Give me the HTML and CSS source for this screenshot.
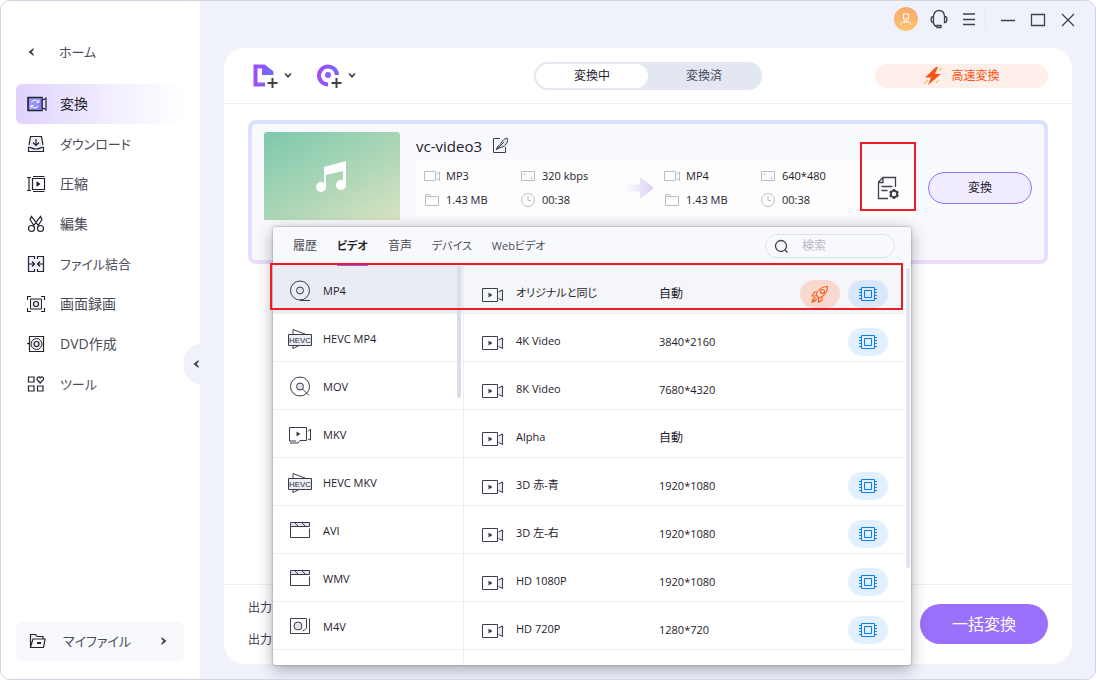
FILE: index.html
```html
<!DOCTYPE html>
<html lang="ja">
<head>
<meta charset="utf-8">
<meta name="viewport" content="width=device-width, initial-scale=1">
<title>変換</title>
<link rel="stylesheet" href="styles.css">
</head>
<body>
<svg class="sprite" aria-hidden="true">
  <defs>
    <linearGradient id="violet" x1="0" y1="0" x2="1" y2="0"><stop offset="0" stop-color="#a04ef8"/><stop offset="1" stop-color="#7268fb"/></linearGradient>
    <linearGradient id="fade" x1="0" y1="0" x2="1" y2="0"><stop offset="0" stop-color="#ded4f6" stop-opacity=".1"/><stop offset="1" stop-color="#d8cdf3"/></linearGradient>
  </defs>
  <symbol id="play" viewBox="0 0 22 16"><path d="M1.500 1.500h15v13h-15z" class="line"/><path d="M7.500 5.500v5l4-2.500z" fill="#3a3c4c"/><path d="M17.500 5l4-2v10.500l-4-2" fill="#e3e5ef" stroke="#3a3c4c"/></symbol>
  <symbol id="disc" viewBox="0 0 24 22"><circle cx="12" cy="10.500" r="9.500" class="line"/><circle cx="12" cy="10.500" r="3.500" fill="#dfe2ec" stroke="#3a3c4c"/><path d="M12 20.500h10" class="line"/></symbol>
  <symbol id="disc-q" viewBox="0 0 24 22"><circle cx="12" cy="10.500" r="9.500" class="line"/><circle cx="12" cy="10.500" r="3.500" fill="#dfe2ec" stroke="#3a3c4c"/><path d="M14.500 13l6.500 6.500" class="line"/></symbol>
  <symbol id="mkv" viewBox="0 0 24 22"><path d="M8 17H1.500V3.500h17v13H12M2 19h8l2-2.500" class="line"/><path d="M8.500 7.500v5l4-2.500z" fill="#3a3c4c"/><path d="M20 7.500L22.500 5v11L20 15" class="line"/></symbol>
  <symbol id="clap" viewBox="0 0 24 22"><path d="M2.500 2.500h19v4h-19z" fill="#dfe2ec" stroke="#3a3c4c"/><path d="M2.500 6.500v11h19v-9M7 3l3 3M14 3l3 3" class="line"/></symbol>
  <symbol id="m4v" viewBox="0 0 24 22"><path d="M18.500 2.500h-16v15h19v-15" class="line"/><circle cx="10" cy="10" r="4" fill="#dfe2ec" stroke="#3a3c4c"/><path d="M18.500 3v8c0 2-1.500 3-4 4" class="line"/></symbol>
  <symbol id="chip" viewBox="0 0 18 16"><path d="M2.500 1.500h13v13h-13zM5.500 4.500h7v7h-7zM0 3.500h2.500M0 6.500h2.500M0 9.500h2.500M0 12.500h2.500M15.500 3.500H18M15.500 6.500H18M15.500 9.500H18M15.500 12.500H18" fill="none" stroke="#0a7cf0"/></symbol>
  <symbol id="rocket" viewBox="0 0 18 18"><g fill="none" stroke="#f4601c" stroke-width="1.200"><path d="M5 10C6.500 5 11 1.500 16.500 1.500c0 5.500-3.500 10-8.500 11.500zM6.500 7L3.500 7 1 11h3.500M11 12v3l-3.500 2.500V13"/><circle cx="11.500" cy="6.500" r="2"/><path d="M4.500 12.500c-2 .5-3 2-3.500 4.500 2.500-.5 4-1.500 4.500-3.500M1 14.500l3 2"/></g></symbol>
  <symbol id="s-video" viewBox="0 0 16 12"><path d="M.5 1.500h11v9H.5zM12.500 4L15.500 2v8.500l-3-2" class="pale"/></symbol>
  <symbol id="s-folder" viewBox="0 0 16 14"><path d="M1.500 12.500v-11h4l1.500 2h7.500v9zM1.500 3.500H7" class="pale"/></symbol>
  <symbol id="s-size" viewBox="0 0 16 12"><path d="M1.500 1.500h13v9h-13zM4 5V4h1.500M12 7v1.500h-1.500" class="pale"/></symbol>
  <symbol id="s-clock" viewBox="0 0 16 14"><circle cx="8" cy="7" r="6.500" class="pale"/><path d="M8 3v4.500h3" class="pale"/></symbol>
  <symbol id="caret" viewBox="0 0 8 6"><path d="M0 0.500h2L4 2.500 6 .5h2L4 5z" fill="#3a3c48"/></symbol>
  <symbol id="left" viewBox="0 0 6 8"><path d="M5.500 0v2L3.500 4l2 2v2L.5 4z" fill="#3a3c48"/></symbol>
</svg>

<div class="window">
  <aside class="sidebar">
    <nav class="nav">
      <a class="home kana" href="#"><svg class="back"><use href="#left"/></svg>ホーム</a>
      <ul class="menu">
        <li><a class="item current" href="#"><svg viewBox="0 0 20 18"><path d="M1 2.500h14v13H1z" fill="#9a92fa" stroke="#22232f" stroke-width="1.300"/><path d="M11 2.500h4v13h-4z" fill="#837af6" /><path d="M1 2.500h14v13H1z" fill="none" stroke="#22232f"/><path d="M16 5l3-2v12l-3-2" class="dark"/><path d="M4.500 7.500c1-3 5.500-3 7-.5M12 4.500v3H9.500M11.500 10.500c-1 3-5.500 3-7 .5M4 13.500v-3h2.500" fill="none" stroke="#fff"/></svg>変換</a></li>
        <li><a class="item kana" href="#"><svg viewBox="0 0 20 18"><path d="M3.500 1.500h11l2 10v5h-15v-5z" fill="#eceef6"/><path d="M2 10l1.500-8.500h11L16 10M1.500 12v4.500h15V12M1.500 12c3 0 3 2 7.500 2s4.500-2 7.500-2M9 4v6M6 7.500l3 3 3-3" class="dark"/></svg>ダウンロード</a></li>
        <li><a class="item" href="#"><svg viewBox="0 0 20 18"><path d="M5.500 3.500h12v11h-12z" fill="#eceef6" class="dark"/><path d="M2 3v12M0 2.500h4M0 15.500h4M6 1.500h11.500M6 16.500h11.500" class="dark"/><path d="M9.500 6v6l4-3z" fill="#22232f"/></svg>圧縮</a></li>
        <li><a class="item" href="#"><svg viewBox="0 0 20 18"><path d="M12 11.500L4.500 1.500 3 4.500l4.500 7M6 11.500l7.500-10L15 4.500l-4.500 7" class="dark"/><circle cx="4.500" cy="13.500" r="3" class="dark"/><circle cx="13.500" cy="13.500" r="3" class="dark"/></svg>編集</a></li>
        <li><a class="item kana" href="#"><svg viewBox="0 0 20 18"><path d="M1.500 1.500h15v15h-15z" fill="#eceef6"/><path d="M7.500 4V1.500h-6v15h6V14M10.500 4V1.500h6v15h-6V14M2 9h5M5 6.500L7.500 9 5 11.500M16 9h-5M13 6.500L10.500 9l2.500 2.500" class="dark"/></svg>ファイル結合</a></li>
        <li><a class="item" href="#"><svg viewBox="0 0 20 18"><path d="M3.500 4h11v10h-11z" fill="#eceef6" stroke="#22232f"/><circle cx="9" cy="9" r="2.500" class="dark"/><path d="M.5 5V1.500H4M14 1.500h3.500V5M.5 13v3.500H4M14 16.500h3.500V13" class="dark"/></svg>画面録画</a></li>
        <li><a class="item" href="#"><svg viewBox="0 0 20 18"><path d="M2.500 1.500h14v15h-14z" class="dark"/><circle cx="9.500" cy="9" r="5.500" fill="#eceef6" stroke="#22232f"/><circle cx="9.500" cy="9" r="2.500" class="dark"/><path d="M0 8.500h3" class="dark"/></svg>DVD作成</a></li>
        <li><a class="item kana" href="#"><svg viewBox="0 0 20 18"><path d="M1.500 2h5.500v5H1.500zM1.500 11h5.500v5H1.500zM10.500 11H16v5h-5.500zM13.200 8L10 4.500C10 2 12 1 13.200 3 14.500 1 17 2 16.500 4.500z" class="dark"/></svg>ツール</a></li>
      </ul>
    </nav>
    <button class="files kana" type="button"><svg viewBox="0 0 18 16"><path d="M1.500 14V1.500h5l1.500 2h6V6M1.500 14L4 6h12l-1.500 8.500h-13z" class="dark"/><path d="M8 9h4v2H8z" fill="#22232f"/></svg><span>マイファイル</span><svg class="go"><use href="#left"/></svg></button>
    <button class="collapse" type="button" aria-label="折りたたむ"><svg><use href="#left"/></svg></button>
  </aside>

  <main class="main">
    <header class="titlebar">
      <button class="avatar" type="button" aria-label="アカウント"><svg viewBox="0 0 12 12"><path d="M3.500 1h5v5h-5zM1 11.500c0-3.500 10-3.500 10 0M3.500 8h5" fill="none" stroke="#fff"/></svg></button>
      <button class="tool" type="button" aria-label="サポート"><svg viewBox="0 0 18 20"><path d="M3.500 7C4 3 6 1.500 9 1.500s5 1.500 5.500 5.500M3.500 7v6.500H3C.5 13.500.5 7.500 3 7.500M14.500 7v6.500h.5c2.500 0 2.500-6 0-6M3.500 13.500C4 16 5 17.500 7 17.500M7 16.500h4v2H7z" class="bold"/></svg></button>
      <button class="tool" type="button" aria-label="メニュー"><svg viewBox="0 0 18 20"><path d="M3 5h12M3 10.500h12M3 15.500h12" class="bold"/></svg></button>
      <div class="system">
        <button class="tool" type="button" aria-label="最小化"><svg viewBox="0 0 18 20"><path d="M2 11.500h14" class="bold"/></svg></button>
        <button class="tool" type="button" aria-label="最大化"><svg viewBox="0 0 18 20"><path d="M2.500 5.500h13v11h-13z" class="bold"/></svg></button>
        <button class="tool" type="button" aria-label="閉じる"><svg viewBox="0 0 18 20"><path d="M3 5l12 12M15 5L3 17" class="bold"/></svg></button>
      </div>
    </header>

    <section class="workspace">
      <div class="toolbar">
        <div class="adders">
          <button class="adder" type="button" aria-label="ファイルを追加"><svg class="add" viewBox="0 0 26 26"><path d="M13 21.500H3.500v-18h8.500L19.500 9.500v2.500M12 3.500V10h7" fill="none" stroke="url(#violet)" stroke-width="4"/><path d="M20.500 15v10M15.500 20h10" fill="none" stroke="#3f414d" stroke-width="2"/></svg><svg class="drop"><use href="#caret"/></svg></button>
          <button class="adder" type="button" aria-label="ディスクを追加"><svg class="add" viewBox="0 0 26 26"><path d="M12 21.500A9 9 0 1 1 21 12" fill="none" stroke="url(#violet)" stroke-width="4"/><circle cx="12" cy="12" r="3" fill="#8a60fa"/><path d="M20.500 15v10M15.500 20h10" fill="none" stroke="#3f414d" stroke-width="2"/></svg><svg class="drop"><use href="#caret"/></svg></button>
        </div>
        <div class="segments">
          <button class="segment on" type="button">変換中</button>
          <button class="segment" type="button">変換済</button>
        </div>
        <button class="fast" type="button"><svg viewBox="0 0 20 20"><path d="M13 1L2 11.500h6L5 19 18 8h-6l3-7z" fill="#fb5312"/><path d="M16 5l3-3M1 18l4-4M13 17l3-3" stroke="#ffc37c" stroke-width="1.500"/></svg>高速変換</button>
      </div>

      <div class="queue">
        <article class="job">
          <svg class="thumb" viewBox="0 0 136 88" role="img" aria-label="音楽"><path d="M60 35l22-6v24h-3V39L62 43v13h-2z" fill="#fff"/><circle cx="57" cy="55" r="5" fill="#fff"/><circle cx="77" cy="53" r="5" fill="#fff"/></svg>
          <div class="info">
            <h2 class="name">vc-video3 <button class="edit" type="button" aria-label="名前を編集"><svg viewBox="0 0 18 18"><path d="M8 1.500H1.500v14h12V10" class="line"/><path d="M4 13l2-4C9 8 10 2 15 1c2 3-1 8-5 9l-4 1.500L4 13l8-8" fill="#dfe2ec" stroke="#3a3c4c"/></svg></button></h2>
            <div class="specs">
              <ul class="spec-grid">
                <li><svg><use href="#s-video"/></svg>MP3</li><li><svg><use href="#s-size"/></svg>320 kbps</li>
                <li><svg><use href="#s-folder"/></svg>1.43 MB</li><li><svg><use href="#s-clock"/></svg>00:38</li>
              </ul>
              <svg class="arrow" viewBox="0 0 28 24"><path d="M0 8.500h14V1l14 11-14 11v-7.500H0z" fill="url(#fade)"/></svg>
              <ul class="spec-grid">
                <li><svg><use href="#s-video"/></svg>MP4</li><li><svg><use href="#s-size"/></svg>640*480</li>
                <li><svg><use href="#s-folder"/></svg>1.43 MB</li><li><svg><use href="#s-clock"/></svg>00:38</li>
              </ul>
              <button class="settings" type="button" aria-label="出力設定"><svg viewBox="0 0 24 24"><path d="M12 22.500H2.500V6L7 1.500h12.500V11M2.500 6.500H7v-5M5.500 10.500h11M5.500 14.500h6" class="bold"/><circle cx="18" cy="18" r="3.200" fill="none" stroke="#3f414d" stroke-width="2"/><path d="M18 13v2.500M18 20.500V23M13.700 15.500l2 1.200M20.300 19.300l2 1.200M22.300 15.500l-2 1.200M15.700 19.300l-2 1.200" stroke="#3f414d" stroke-width="2.400"/></svg></button>
            </div>
          </div>
          <button class="convert" type="button">変換</button>

          <div class="popup">
            <div class="popup-head">
              <div class="tabs">
                <button class="tab" type="button">履歴</button>
                <button class="tab kana on" type="button">ビデオ</button>
                <button class="tab" type="button">音声</button>
                <button class="tab kana" type="button">デバイス</button>
                <button class="tab kana" type="button">Webビデオ</button>
              </div>
              <label class="search"><svg viewBox="0 0 16 16"><circle cx="7" cy="8" r="5.500" class="bold"/><path d="M11 12l2.500 2.500" class="bold"/></svg><input type="text" placeholder="検索" aria-label="検索"></label>
            </div>
            <div class="popup-body">
              <ul class="formats">
                <li><button class="format on" type="button"><svg><use href="#disc"/></svg>MP4</button></li>
                <li><button class="format" type="button"><svg viewBox="0 0 24 22"><path d="M5 6.500V1.500L18 6.500M5 17.500v3l6-3" class="line"/><path d="M.5 6.500h23v11H.5z" fill="#eceef6" stroke="#3a3c4c"/><text x="12" y="14.500" text-anchor="middle" class="hevc-text">HEVC</text></svg>HEVC MP4</button></li>
                <li><button class="format" type="button"><svg><use href="#disc-q"/></svg>MOV</button></li>
                <li><button class="format" type="button"><svg><use href="#mkv"/></svg>MKV</button></li>
                <li><button class="format" type="button"><svg viewBox="0 0 24 22"><path d="M5 6.500V1.500L18 6.500M5 17.500v3l6-3" class="line"/><path d="M.5 6.500h23v11H.5z" fill="#eceef6" stroke="#3a3c4c"/><text x="12" y="14.500" text-anchor="middle" class="hevc-text">HEVC</text></svg>HEVC MKV</button></li>
                <li><button class="format" type="button"><svg><use href="#clap"/></svg>AVI</button></li>
                <li><button class="format" type="button"><svg><use href="#clap"/></svg>WMV</button></li>
                <li><button class="format" type="button"><svg><use href="#m4v"/></svg>M4V</button></li>
              </ul>
              <div class="profiles">
                <table class="profile-table">
                  <tbody>
                    <tr class="on"><td class="p-name"><svg><use href="#play"/></svg>オリジナルと同じ</td><td class="p-size ja">自動</td><td class="p-tags"><span class="pill hot"><svg><use href="#rocket"/></svg></span><span class="pill"><svg><use href="#chip"/></svg></span></td></tr>
                    <tr><td class="p-name"><svg><use href="#play"/></svg>4K Video</td><td class="p-size">3840*2160</td><td class="p-tags"><span class="pill"><svg><use href="#chip"/></svg></span></td></tr>
                    <tr><td class="p-name"><svg><use href="#play"/></svg>8K Video</td><td class="p-size">7680*4320</td><td class="p-tags"></td></tr>
                    <tr><td class="p-name"><svg><use href="#play"/></svg>Alpha</td><td class="p-size ja">自動</td><td class="p-tags"></td></tr>
                    <tr><td class="p-name"><svg><use href="#play"/></svg>3D 赤-青</td><td class="p-size">1920*1080</td><td class="p-tags"><span class="pill"><svg><use href="#chip"/></svg></span></td></tr>
                    <tr><td class="p-name"><svg><use href="#play"/></svg>3D 左-右</td><td class="p-size">1920*1080</td><td class="p-tags"><span class="pill"><svg><use href="#chip"/></svg></span></td></tr>
                    <tr><td class="p-name"><svg><use href="#play"/></svg>HD 1080P</td><td class="p-size">1920*1080</td><td class="p-tags"><span class="pill"><svg><use href="#chip"/></svg></span></td></tr>
                    <tr><td class="p-name"><svg><use href="#play"/></svg>HD 720P</td><td class="p-size">1280*720</td><td class="p-tags"><span class="pill"><svg><use href="#chip"/></svg></span></td></tr>
                  </tbody>
                </table>
              </div>
              <div class="track"><div class="thumbbar"></div></div>
            </div>
            <div class="highlight"></div>
          </div>
        </article>
      </div>

      <footer class="output">
        <div class="output-labels"><span>出力</span><span>出力</span></div>
        <button class="convert-all" type="button">一括変換</button>
      </footer>
    </section>
  </main>
</div>
</body>
</html>
```

FILE: styles.css
```css
* { box-sizing: border-box; }

body {
  margin: 0;
  background: #fff;
  color: #1f202c;
  font: 12px/16px "Open Sans", "Noto Sans CJK JP", sans-serif;
  font-feature-settings: "palt";
}

button {
  margin: 0;
  padding: 0;
  border: 0;
  background: none;
  color: inherit;
  font: inherit;
  font-feature-settings: inherit;
  cursor: pointer;
}

ul { margin: 0; padding: 0; list-style: none; }
a { color: inherit; text-decoration: none; }
svg { display: block; flex: none; }

.sprite { position: absolute; width: 0; height: 0; }
.line { fill: none; stroke: #3a3c4c; }
.dark { fill: none; stroke: #22232f; stroke-width: 1.2; }
.bold { fill: none; stroke: #3f414d; stroke-width: 1.3; }
.pale { fill: none; stroke: #bcb9ca; }
.hevc-text { font: 8px "Liberation Sans", sans-serif; fill: #2b2c38; }

.window {
  display: flex;
  min-height: 100vh;
  border: 1px solid #d3d3e2;
  border-radius: 10px;
  background: #eff2fb;
  overflow: hidden;
}

/* Sidebar */
.sidebar {
  position: relative;
  display: flex;
  flex-direction: column;
  justify-content: space-between;
  flex: none;
  width: 199px;
  padding: 31px 16px 18px 15px;
  background: #fff;
  color: #4a4b58;
  font-size: 14px;
  line-height: 20px;
}
.sidebar .kana { font-size: 13px; }

.home { display: flex; align-items: center; gap: 25px; height: 40px; padding-left: 12px; }
.back { width: 6px; height: 8px; }
.menu { margin-top: 12px; }
.item { display: flex; align-items: center; gap: 13px; height: 40px; padding-left: 11px; border-radius: 6px; }
.item svg { width: 20px; height: 18px; }
.current { background: linear-gradient(90deg, #dfd2fd, #f4effe 60%, #fff); color: #22232f; }

.files { display: flex; align-items: center; gap: 16px; width: 100%; height: 40px; padding: 0 17px 0 13px; border-radius: 6px; background: #f7f9fc; text-align: left; }
.files span { flex: 1; }
.files svg { width: 18px; height: 16px; }
.files .go { width: 6px; height: 8px; transform: rotate(180deg); }

.collapse {
  position: absolute;
  top: 343px;
  right: 0;
  display: flex;
  align-items: center;
  width: 16px;
  height: 40px;
  padding-left: 9px;
  border-radius: 16px 0 0 16px;
  background: #eff2fb;
}
.collapse svg { width: 6px; height: 8px; }

/* Main */
.main { display: flex; flex-direction: column; flex: 1; min-width: 0; padding: 0 23px 15px 24px; }

.titlebar { display: flex; align-items: center; justify-content: flex-end; gap: 12px; height: 47px; padding-bottom: 12px; }
.avatar { display: grid; place-items: center; width: 24px; height: 24px; border-radius: 50%; background: linear-gradient(#f8aa6c, #fcc372); }
.avatar svg { width: 12px; height: 12px; }
.tool svg { width: 18px; height: 20px; }
.system { display: flex; gap: 12px; margin: 0 -5px 0 -5px; padding-left: 13px; border-left: 1px solid #e3e6f1; }

.workspace { display: flex; flex-direction: column; flex: 1; border-radius: 20px; background: #fff; }

.toolbar { display: grid; grid-template-columns: 1fr auto 1fr; align-items: center; height: 56px; padding: 0 24px; border-bottom: 1px solid #eeeff3; }
.adders { display: flex; gap: 24px; padding-left: 4px; }
.adder { display: flex; align-items: center; gap: 6px; }
.add { width: 26px; height: 26px; }
.drop { width: 8px; height: 6px; }
.segments { display: flex; width: 228px; padding: 2px; border-radius: 14px; background: #e2e7f1; color: #4a4b58; }
.segment { flex: 1; height: 24px; border-radius: 12px; }
.segment.on { background: #fff; color: #1f202c; }
.fast { display: flex; align-items: center; justify-content: center; justify-self: end; gap: 8px; width: 173px; height: 24px; border-radius: 12px; background: #ffefeb; color: #fb5312; }
.fast svg { width: 20px; height: 20px; }

.queue { flex: 1; padding: 16px 24px; }

.job {
  position: relative;
  display: flex;
  min-height: 144px;
  padding: 8px 12px;
  border: 4px solid transparent;
  border-radius: 8px;
  background: linear-gradient(#f7f9fc, #f7f9fc) padding-box, linear-gradient(#dbe0fe, #ebdcfd) border-box;
}
.thumb { width: 136px; height: 88px; border-radius: 3px 3px 0 0; background: linear-gradient(150deg, #7dc9ac, #a8d5b6 50%, #d9e3c0); }
.info { flex: 1; min-width: 0; margin: 0 12px 0 16px; }
.name { display: flex; align-items: center; gap: 10px; height: 28px; margin: 0; font-size: 15px; font-weight: 400; }
.edit svg { width: 18px; height: 18px; }
.specs { display: flex; align-items: center; height: 56px; padding-left: 8px; border-radius: 4px; background: #fdfdfe; font-size: 11px; }
.spec-grid { display: grid; grid-template-columns: 96px 96px; grid-auto-rows: 24px; }
.spec-grid li { display: flex; align-items: center; gap: 6px; white-space: nowrap; }
.spec-grid svg { width: 16px; height: 14px; }
.arrow { width: 28px; height: 24px; margin: 0 10px; }
.settings { position: relative; display: grid; place-items: center; width: 56px; height: 56px; margin-left: auto; }
.settings svg { width: 24px; height: 24px; }
.settings::after { content: ""; position: absolute; inset: -18px 0 5px; border: 2px solid #ed1c24; }
.convert { width: 104px; height: 32px; margin-top: 40px; border: 1px solid #9671f8; border-radius: 16px; background: #f0ebfd; }

/* Format popup */
.popup {
  position: absolute;
  z-index: 2;
  top: 103px;
  left: 21px;
  width: 638px;
  height: 438px;
  border-radius: 3px;
  background: #fff;
  box-shadow: 0 0 2px rgba(40, 40, 60, .5), 0 4px 16px rgba(40, 40, 60, .4);
}
.popup-head { display: flex; justify-content: space-between; height: 39px; padding: 0 16px 0 20px; border-bottom: 1px solid #eceef4; border-radius: 3px 3px 0 0; background: #f8f9fc; color: #4a4b58; }
.tabs { display: flex; gap: 20px; }
.tab { height: 39px; border-bottom: 2px solid transparent; }
.tab.kana { font-size: 11px; }
.tab.on { border-color: #8a60fa; color: #1f202c; font-weight: 700; }
.search { display: flex; align-items: center; gap: 12px; width: 130px; height: 24px; margin-top: 7px; padding: 0 8px; border: 1px solid #dfe2ee; border-radius: 12px; }
.search svg { width: 16px; height: 16px; }
.search input { flex: 1; min-width: 0; padding: 0; border: 0; outline: 0; background: none; font: inherit; }
.search input::placeholder { color: #bcb9ca; opacity: 1; }

.popup-body { display: flex; height: 399px; overflow: hidden; }
.formats { position: relative; width: 191px; border-right: 1px solid #eeeff3; font-size: 11px; }
.formats::after { content: ""; position: absolute; top: 0; right: 2px; width: 4px; height: 132px; border-radius: 2px; background: #d9deea; }
.format { display: flex; align-items: center; gap: 11px; width: 100%; height: 48px; padding: 2px 0 0 15px; border-bottom: 1px solid #eceef3; text-align: left; }
.format svg { width: 24px; height: 22px; }
.format.on { background: #e9edf3; }

.profiles { flex: 1; min-width: 0; }
.profile-table { width: 100%; table-layout: fixed; border-collapse: separate; border-spacing: 0; font-size: 11px; }
.profile-table td { height: 48px; padding: 9px 0 0; border-bottom: 1px solid #eceef3; vertical-align: middle; white-space: nowrap; }
.profile-table .on td { background: #f4f6f9; }
.profile-table .p-name { width: 195px; padding-left: 17px; }
.p-name svg { display: inline-block; width: 22px; height: 16px; margin-right: 13px; vertical-align: middle; }
.profile-table .ja { font-size: 12px; }
.profile-table .p-tags { padding-right: 16px; text-align: right; }
.pill { display: inline-grid; place-items: center; width: 40px; height: 28px; margin-left: 8px; border-radius: 14px; background: #e2effe; vertical-align: middle; }
.pill svg { width: 18px; height: 16px; }
.on .pill { background: #d9e7fb; }
.on .hot { background: #f9d9cf; }
.hot svg { height: 18px; }
.track { width: 7px; padding-top: 2px; }
.thumbbar { width: 4px; height: 300px; margin-left: 2px; border-radius: 2px; background: #e0e5ef; }
.highlight { position: absolute; top: 36px; left: -3px; width: 633px; height: 47px; border: 2px solid #ed1c24; pointer-events: none; }

/* Output bar */
.output { display: flex; align-items: center; justify-content: space-between; height: 80px; padding: 0 24px 2px; border-top: 1px solid #eceef3; }
.output-labels { display: grid; gap: 16px; color: #3f414d; }
.convert-all { width: 128px; height: 40px; border-radius: 20px; background: #9a70fb; color: #fff; font-size: 16px; }
```
